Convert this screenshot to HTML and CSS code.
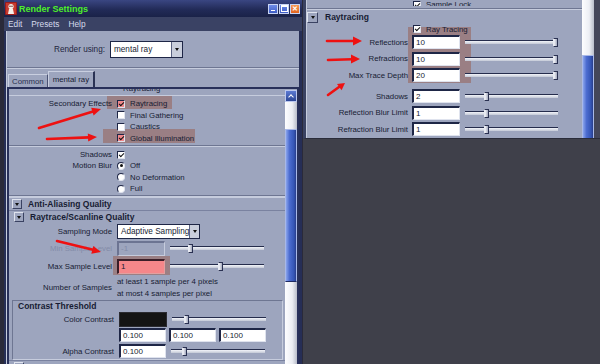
FILE: index.html
```html
<!DOCTYPE html>
<html lang="en">
<head>
    <meta charset="UTF-8">
    <title>Render Settings - mental ray</title>
    <link rel="stylesheet" href="styles.css">
</head>
<body>
<div class="screen">

    <!-- left: the Render Settings window -->
    <div class="win">
        <div class="titlebar">
            <span class="app-icon">
                <svg width="12" height="13" viewBox="0 0 12 13">
                    <rect x="0" y="0" width="12" height="13" rx="1" fill="#9a1c1c"/>
                    <rect x="1" y="1" width="10" height="11" fill="#c63a2e"/>
                    <circle cx="6" cy="4.5" r="2.6" fill="#f4f0ea"/>
                    <path d="M3 12 L4 7 L8 7 L9 12 Z" fill="#f4f0ea"/>
                    <circle cx="5" cy="4.3" r="0.7" fill="#5a1010"/>
                    <circle cx="7" cy="4.3" r="0.7" fill="#5a1010"/>
                </svg>
            </span>
            <span class="title">Render Settings</span>
            <span class="wbtns">
                <span class="wbtn min"></span>
                <span class="wbtn max"></span>
                <span class="wbtn close">&#x2715;</span>
            </span>
        </div>
        <div class="menubar">
            <span>Edit</span>
            <span>Presets</span>
            <span>Help</span>
        </div>

        <div class="winbody">
            <div class="render-using">
                <span class="ru-label">Render using:</span>
                <div class="combo ru-combo"><span>mental ray</span><i class="combo-btn"></i></div>
            </div>

            <div class="tabs">
                <span class="tab">Common</span>
                <span class="tab active">mental ray</span>
            </div>

            <div class="panel">
                <div class="content">
                    <div class="hl hl-rt"></div>
                    <div class="hl hl-gi"></div>
                    <div class="hl hl-max"></div>

                    <div class="cut-row"><span>Raytracing</span></div>

                    <div class="group">
                        <div class="row r-sec"><span class="lab">Secondary Effects</span><span class="ctl"><i class="cb on pink"></i>Raytracing</span></div>
                        <div class="row r-sec"><span class="lab"></span><span class="ctl"><i class="cb"></i>Final Gathering</span></div>
                        <div class="row r-sec"><span class="lab"></span><span class="ctl"><i class="cb"></i>Caustics</span></div>
                        <div class="row r-sec"><span class="lab"></span><span class="ctl"><i class="cb on pink"></i>Global Illumination</span></div>
                    </div>

                    <div class="sep"></div>

                    <div class="group">
                        <div class="row r-mb"><span class="lab">Shadows</span><span class="ctl"><i class="cb on"></i></span></div>
                        <div class="row r-mb"><span class="lab">Motion Blur</span><span class="ctl"><i class="rb on"></i>Off</span></div>
                        <div class="row r-mb"><span class="lab"></span><span class="ctl"><i class="rb"></i>No Deformation</span></div>
                        <div class="row r-mb"><span class="lab"></span><span class="ctl"><i class="rb"></i>Full</span></div>
                    </div>

                    <div class="sep"></div>

                    <div class="sect-head"><i class="tri"></i>Anti-Aliasing Quality</div>
                    <div class="sect-head sub"><i class="tri"></i>Raytrace/Scanline Quality</div>

                    <div class="row r-mode"><span class="lab">Sampling Mode</span><span class="ctl"><div class="combo mode-combo"><span>Adaptive Sampling</span><i class="combo-btn"></i></div></span></div>
                    <div class="row r-lvl off"><span class="lab">Min Sample Level</span><span class="ctl"><span class="field dim">-1</span><span class="slider"><i class="knob" style="left: 18px"></i></span></span></div>
                    <div class="row r-lvl"><span class="lab">Max Sample Level</span><span class="ctl"><span class="field pinkf">1</span><span class="slider"><i class="knob" style="left: 48px"></i></span></span></div>

                    <div class="row r-num"><span class="lab">Number of Samples</span><span class="ctl lines"><span>at least 1 sample per 4 pixels</span><span>at most 4 samples per pixel</span></span></div>

                    <div class="frame">
                        <div class="frame-title">Contrast Threshold</div>
                        <div class="row fr"><span class="lab">Color Contrast</span><span class="ctl"><span class="swatch"></span><span class="slider"><i class="knob" style="left: 12px"></i></span></span></div>
                        <div class="row fr"><span class="lab"></span><span class="ctl trio"><span class="field f47">0.100</span><span class="field f47">0.100</span><span class="field f47">0.100</span></span></div>
                        <div class="row fr"><span class="lab">Alpha Contrast</span><span class="ctl"><span class="field f47">0.100</span><span class="slider"><i class="knob" style="left: 11px"></i></span></span></div>
                    </div>
                    <div class="sect-head sub"><i class="tri"></i></div>
                </div>

                <div class="scrollbar">
                    <div class="sb-up"></div>
                    <div class="sb-track t1"></div>
                    <div class="sb-thumb"></div>
                    <div class="sb-track t2"></div>
                </div>
            </div>
        </div>
    </div>

    <!-- right: cropped Raytracing section -->
    <div class="right">
        <div class="rpanel">
            <div class="content rcontent">
                <div class="hl hl-ray"></div>

                <div class="row r-top"><span class="lab"></span><span class="ctl"><i class="cb on"></i>Sample Lock</span></div>
                <div class="sep rsep"></div>
                <div class="sect-head rhead"><i class="tri"></i>Raytracing</div>

                <div class="row r-rt"><span class="lab"></span><span class="ctl"><i class="cb on"></i>Ray Tracing</span></div>
                <div class="row r-ray"><span class="lab">Reflections</span><span class="ctl"><span class="field">10</span><span class="slider"><i class="knob" style="left: 88px"></i></span></span></div>
                <div class="row r-ray"><span class="lab">Refractions</span><span class="ctl"><span class="field">10</span><span class="slider"><i class="knob" style="left: 88px"></i></span></span></div>
                <div class="row r-ray"><span class="lab">Max Trace Depth</span><span class="ctl"><span class="field">20</span><span class="slider"><i class="knob" style="left: 88px"></i></span></span></div>

                <div class="row r-ray gap"><span class="lab">Shadows</span><span class="ctl"><span class="field">2</span><span class="slider"><i class="knob" style="left: 19px"></i></span></span></div>
                <div class="row r-ray"><span class="lab">Reflection Blur Limit</span><span class="ctl"><span class="field">1</span><span class="slider"><i class="knob" style="left: 19px"></i></span></span></div>
                <div class="row r-ray"><span class="lab">Refraction Blur Limit</span><span class="ctl"><span class="field">1</span><span class="slider"><i class="knob" style="left: 19px"></i></span></span></div>
            </div>
            <div class="scrollbar rscroll">
                <div class="sb-track t1"></div>
                <div class="sb-thumb"></div>
            </div>
            <div class="redge"></div>
        </div>
        <div class="dark"></div>
    </div>

    <!-- red annotation arrows -->
    <svg class="arrows" width="600" height="364" viewBox="0 0 600 364">
        <g stroke="#ee1111" stroke-width="2.6" stroke-linecap="round" fill="none">
            <line x1="39" y1="128" x2="93" y2="111.5"/>
            <line x1="47" y1="139" x2="89" y2="137.4"/>
            <line x1="57" y1="241" x2="93" y2="249.8"/>
            <line x1="327" y1="41" x2="354" y2="41"/>
            <line x1="328" y1="60" x2="352" y2="59.3"/>
            <line x1="328" y1="95" x2="339" y2="87"/>
        </g>
        <g fill="#ee1111">
            <polygon points="101,109 93.6,115.5 91.2,107.8"/>
            <polygon points="97,137 88.2,141.4 87.8,133.4"/>
            <polygon points="101,252 91.3,253.7 93.3,245.9"/>
            <polygon points="362,41 353,45.5 353,36.5"/>
            <polygon points="360,59 351,63.5 351,54.5"/>
            <polygon points="345,83 341.6,90.3 337,83.9"/>
        </g>
    </svg>
</div>
</body>
</html>
```

FILE: styles.css
```css
* {
    margin: 0;
    padding: 0;
    box-sizing: border-box;
}

body {
    width: 600px;
    height: 364px;
    overflow: hidden;
    background-color: #2a2a3a;
    font-family: "Liberation Sans", Arial, sans-serif;
    font-size: 7.8px;
    color: #171c33;
}

.screen {
    position: relative;
    display: flex;
    width: 600px;
    height: 364px;
}

/* ---------- window chrome ---------- */

.win {
    width: 298px;
    height: 364px;
    margin-left: 4px;
    display: flex;
    flex-direction: column;
    overflow: hidden;
    background-color: #262e56;
}

.titlebar {
    flex-shrink: 0;
    height: 17px;
    display: flex;
    align-items: center;
    padding: 0 2px 0 1px;
    background: linear-gradient(#3a4682, #222b58 55%, #1a2248);
}

.app-icon {
    display: flex;
    margin-right: 2px;
}

.title {
    flex: 1;
    color: #4ef02a;
    font-weight: bold;
    font-size: 9px;
}

.wbtns {
    display: flex;
    gap: 1px;
}

.wbtn {
    width: 10px;
    height: 10px;
    border: 1px solid #c8d4f4;
    background: linear-gradient(#6e8ce8, #3e5cc4);
    display: flex;
    align-items: center;
    justify-content: center;
    color: #fff;
}

.wbtn.min::after {
    content: "";
    width: 4px;
    height: 1px;
    margin-top: 3px;
    background-color: #fff;
}

.wbtn.max::after {
    content: "";
    width: 5px;
    height: 4px;
    border: 1px solid #fff;
    border-top-width: 2px;
}

.wbtn.close {
    background: linear-gradient(#f89a58, #e0621e);
    font-size: 7px;
    font-weight: bold;
    line-height: 1;
}

.menubar {
    flex-shrink: 0;
    height: 14px;
    display: flex;
    align-items: center;
    gap: 9px;
    padding-left: 4px;
    background-color: #3a4264;
    color: #d6dbec;
    font-size: 8.3px;
}

.winbody {
    flex: 1;
    min-height: 0;
    display: flex;
    flex-direction: column;
    margin: 0 3px 0 2px;
    background-color: #9da5be;
    border-left: 1px solid #c6ccdd;
}

.render-using {
    flex-shrink: 0;
    height: 37px;
    display: flex;
    align-items: center;
    border-bottom: 1px solid #6e7692;
    box-shadow: 0 1px 0 #c6ccdd;
}

.ru-label {
    width: 98px;
    margin-right: 5px;
    text-align: right;
    font-size: 8.2px;
    color: #1f2540;
}

.combo {
    display: flex;
    height: 16px;
    background-color: #fff;
    border: 1px solid #1e2646;
    font-size: 8.2px;
}

.combo span {
    flex: 1;
    display: flex;
    align-items: center;
    padding-left: 3px;
    white-space: nowrap;
}

.combo-btn {
    width: 11px;
    display: flex;
    align-items: center;
    justify-content: center;
    background-color: #c9cedc;
    border-left: 1px solid #5a6282;
}

.combo-btn::after {
    content: "";
    border-left: 2.5px solid transparent;
    border-right: 2.5px solid transparent;
    border-top: 3px solid #111;
}

.ru-combo {
    width: 73px;
    height: 17px;
}

.tabs {
    flex-shrink: 0;
    height: 19px;
    display: flex;
    align-items: flex-end;
    padding-left: 1px;
}

.tab {
    height: 13px;
    padding: 0 3px;
    display: flex;
    align-items: center;
    border: 1px solid #c9cfe0;
    border-right-color: #4a5274;
    border-bottom: none;
    font-size: 7.8px;
    color: #28304e;
}

.tab.active {
    height: 16px;
    padding: 0 4px;
    color: #171c33;
    border-right: 2px solid #2a3254;
}

.panel {
    flex: 1;
    min-height: 0;
    display: flex;
    border: 2px solid #28305a;
    border-bottom: none;
}

/* ---------- attribute rows ---------- */

.content {
    position: relative;
    z-index: 0;
    flex: 1;
    overflow: hidden;
    background-color: #9da5be;
}

.hl {
    position: absolute;
    z-index: -1;
    background-color: #9a7f84;
}

.hl-rt { left: 98px; top: 6px; width: 65px; height: 14px; }
.hl-gi { left: 94px; top: 40px; width: 92px; height: 14px; }
.hl-max { left: 104px; top: 167px; width: 57px; height: 19px; }
.hl-ray { left: 101px; top: 27px; width: 63px; height: 56px; }

.cut-row {
    height: 7px;
    overflow: hidden;
    padding-left: 114px;
    border-bottom: 1px solid #c6ccdd;
}

.cut-row span {
    display: block;
    margin-top: -5px;
    line-height: 10px;
}

.group {
    margin-top: 2px;
}

.row {
    display: grid;
    grid-template-columns: 103px auto;
    column-gap: 5px;
    align-items: center;
    white-space: nowrap;
}

.lab {
    text-align: right;
}

.ctl {
    display: flex;
    align-items: center;
    gap: 5px;
}

.r-sec { height: 11.5px; }
.r-mb { height: 11.3px; }
.r-mode { height: 16px; }
.r-lvl { height: 18px; }

.row.off .lab {
    color: #838ba8;
}

.r-num {
    height: 25px;
}

.lines {
    flex-direction: column;
    align-items: flex-start;
    gap: 0;
    line-height: 12px;
}

.sep {
    margin-top: 1px;
    border-top: 1px solid #6e7692;
    border-bottom: 1px solid #c6ccdd;
}

.sect-head {
    height: 13px;
    display: flex;
    align-items: center;
    gap: 6px;
    padding-left: 3px;
    border-top: 1px solid #c6ccdd;
    font-weight: bold;
    font-size: 8.5px;
}

.sect-head.sub {
    padding-left: 5px;
    border-top: 1px solid #7a82a0;
}

.tri {
    width: 10px;
    height: 10px;
    display: flex;
    align-items: center;
    justify-content: center;
    border: 1px solid;
    border-color: #dfe3ee #3a4262 #3a4262 #dfe3ee;
}

.tri::after {
    content: "";
    border-left: 2.5px solid transparent;
    border-right: 2.5px solid transparent;
    border-top: 3px solid #111;
}

.cb {
    width: 8px;
    height: 8px;
    display: flex;
    align-items: center;
    justify-content: center;
    background-color: #fff;
    border: 1px solid;
    border-color: #1e2646 #dfe3ee #dfe3ee #1e2646;
}

.cb.on::after {
    content: "";
    width: 2px;
    height: 4px;
    margin-top: -1px;
    border: solid #111;
    border-width: 0 1.5px 1.5px 0;
    transform: rotate(45deg);
}

.cb.pink {
    background-color: #f0878a;
}

.rb {
    width: 8px;
    height: 8px;
    display: flex;
    align-items: center;
    justify-content: center;
    border-radius: 50%;
    background-color: #fff;
    border: 1px solid;
    border-color: #1e2646 #dfe3ee #dfe3ee #1e2646;
}

.rb.on::after {
    content: "";
    width: 3px;
    height: 3px;
    border-radius: 50%;
    background-color: #111;
}

.mode-combo {
    width: 83px;
    height: 15px;
}

.field {
    width: 48px;
    height: 15px;
    display: flex;
    align-items: center;
    padding-left: 2px;
    background-color: #fff;
    border-style: solid;
    border-width: 2px 1px 1px 2px;
    border-color: #1e2646 #dfe3ee #dfe3ee #1e2646;
    font-size: 8px;
}

.field.dim {
    background-color: #9da5be;
    border-color: #6c7492 #c6ccdd #c6ccdd #6c7492;
    color: #838ba8;
}

.field.pinkf {
    background-color: #f5878a;
    border-color: #3a1e28 #e2a0a0 #e2a0a0 #3a1e28;
}

.field.f47 {
    width: 47px;
    height: 14px;
}

.slider {
    position: relative;
    width: 94px;
    height: 12px;
    display: flex;
    align-items: center;
}

.slider::before {
    content: "";
    width: 100%;
    height: 4px;
    background: linear-gradient(#252c4c 0 1px, #f2f4f9 1px, #c3c8d6);
}

.knob {
    position: absolute;
    top: 2px;
    width: 5px;
    height: 9px;
    background: linear-gradient(to right, #f4f5fa, #a4aabe);
    border: 1px solid #2a3152;
    border-left-color: #e8ebf3;
}

/* ---------- contrast frame ---------- */

.frame {
    margin: 0 2px 0 3px;
    border: 1px solid #6e7692;
    border-right-color: #c6ccdd;
    border-bottom-color: #c6ccdd;
}

.frame-title {
    height: 10px;
    display: flex;
    align-items: center;
    padding-left: 5px;
    font-weight: bold;
    font-size: 8.5px;
}

.row.fr {
    height: 16px;
    grid-template-columns: 101px auto;
}

.swatch {
    width: 48px;
    height: 15px;
    background-color: #141414;
    border: 1px solid #2a2a30;
}

.trio {
    gap: 3px;
}

/* ---------- scrollbars ---------- */

.scrollbar {
    flex-shrink: 0;
    width: 12px;
    display: flex;
    flex-direction: column;
    background-color: #9da5be;
}

.sb-up {
    flex-shrink: 0;
    height: 12px;
    margin-top: 1px;
    display: flex;
    align-items: center;
    justify-content: center;
    background: linear-gradient(#5c7ad4, #2c4696);
    border: 1px solid #bcc8ee;
}

.sb-up::after {
    content: "";
    width: 3px;
    height: 3px;
    margin-top: 2px;
    border: solid #fff;
    border-width: 1.5px 0 0 1.5px;
    transform: rotate(45deg);
}

.sb-track {
    flex-shrink: 0;
    background: linear-gradient(to right, #fdfdff, #eceef4 60%, #b9bdca);
}

.sb-track.t1 {
    height: 27px;
}

.sb-track.t2 {
    flex: 1;
}

.sb-thumb {
    flex-shrink: 0;
    height: 153px;
    background: linear-gradient(to right, #8aa4ec, #4c6cd0 35%, #3454b4 80%, #283c8a);
    border: 1px solid #a8b8e8;
    border-bottom-color: #1e2a60;
}

/* ---------- right crop ---------- */

.right {
    width: 297px;
    margin-left: 1px;
    display: flex;
    flex-direction: column;
}

.rpanel {
    flex-shrink: 0;
    height: 139px;
    display: flex;
    border-left: 3px solid #3a4262;
    border-bottom: 1px solid #2a2c3a;
}

.rcontent {
    border-left: 1px solid #c6ccdd;
}

.rcontent .row {
    grid-template-columns: 101px auto;
    column-gap: 4px;
}

.rcontent .slider {
    width: 93px;
}

.rcontent .field {
    height: 14px;
}

.r-top {
    height: 6px;
    overflow: hidden;
    align-items: end;
}

.r-top .ctl {
    padding-left: 1px;
    margin-bottom: -3px;
}

.rsep {
    margin-top: 2px;
}

.rhead {
    height: 14px;
    padding-left: 0;
    gap: 7px;
    border-top: none;
}

.rhead .tri {
    width: 11px;
    height: 11px;
}

.r-rt {
    height: 10px;
}

.r-rt .ctl {
    padding-left: 1px;
}

.r-ray {
    height: 16.5px;
}

.r-ray.gap {
    margin-top: 4.5px;
}

.rscroll .sb-track.t1 {
    height: 55px;
}

.rscroll .sb-thumb {
    flex: 1;
    border-bottom: none;
}

.redge {
    width: 6px;
    background-color: #44465a;
}

.dark {
    flex: 1;
    background-color: #3f404a;
}

.arrows {
    position: absolute;
    left: 0;
    top: 0;
    z-index: 5;
    pointer-events: none;
}
```
